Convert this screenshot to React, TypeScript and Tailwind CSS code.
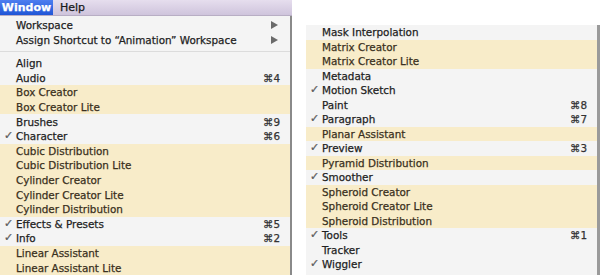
import React from 'react';

type Item = {
  label: string;
  checked?: boolean;
  shortcut?: string;
  sub?: boolean;
  plugin?: boolean;
};

const leftItems: Item[] = [
  { label: 'Align' },
  { label: 'Audio', shortcut: '4' },
  { label: 'Box Creator', plugin: true },
  { label: 'Box Creator Lite', plugin: true },
  { label: 'Brushes', shortcut: '9' },
  { label: 'Character', checked: true, shortcut: '6' },
  { label: 'Cubic Distribution', plugin: true },
  { label: 'Cubic Distribution Lite', plugin: true },
  { label: 'Cylinder Creator', plugin: true },
  { label: 'Cylinder Creator Lite', plugin: true },
  { label: 'Cylinder Distribution', plugin: true },
  { label: 'Effects & Presets', checked: true, shortcut: '5' },
  { label: 'Info', checked: true, shortcut: '2' },
  { label: 'Linear Assistant', plugin: true },
  { label: 'Linear Assistant Lite', plugin: true },
];

const rightItems: Item[] = [
  { label: 'Mask Interpolation' },
  { label: 'Matrix Creator', plugin: true },
  { label: 'Matrix Creator Lite', plugin: true },
  { label: 'Metadata' },
  { label: 'Motion Sketch', checked: true },
  { label: 'Paint', shortcut: '8' },
  { label: 'Paragraph', checked: true, shortcut: '7' },
  { label: 'Planar Assistant', plugin: true },
  { label: 'Preview', checked: true, shortcut: '3' },
  { label: 'Pyramid Distribution', plugin: true },
  { label: 'Smoother', checked: true },
  { label: 'Spheroid Creator', plugin: true },
  { label: 'Spheroid Creator Lite', plugin: true },
  { label: 'Spheroid Distribution', plugin: true },
  { label: 'Tools', checked: true, shortcut: '1' },
  { label: 'Tracker' },
  { label: 'Wiggler', checked: true },
];

function Row({ item, h }: { item: Item; h: string }) {
  return (
    <div
      className={`relative flex items-center pl-4 pr-[10px] ${h} ${
        item.plugin ? 'bg-[#f8ecc9] text-[#3a3020]' : 'bg-[#f4f4f4] text-[#222]'
      }`}
    >
      {item.checked && (
        <span className="absolute left-[4px] top-0 text-[11px] leading-[14.6px] text-[#5a5a5a]">✓</span>
      )}
      <span className="flex-1 whitespace-nowrap">{item.label}</span>
      {item.shortcut && <span className="text-[#333]">⌘{item.shortcut}</span>}
      {item.sub && (
        <svg width="7" height="8" viewBox="0 0 7 8" className="mr-[2px]">
          <path d="M0 0 L7 4 L0 8 Z" fill="#6a6a6a" />
        </svg>
      )}
    </div>
  );
}

export default function App() {
  return (
    <div
      className="flex h-[275px] w-[600px] overflow-hidden bg-white text-[10.4px] leading-none [-webkit-text-stroke:0.25px]"
      style={{ fontFamily: '"DejaVu Sans", "Noto Sans", sans-serif' }}
    >
      {/* menu izquierdo con barra */}
      <div className="flex w-[292px] shrink-0 flex-col">
        <div className="flex h-[17px] items-stretch border-b border-[#b8aec4] bg-gradient-to-b from-[#e6deee] to-[#cfc4dc]">
          <div className="flex w-[53px] items-center justify-center bg-gradient-to-b from-[#4d7ef0] to-[#1f55d6] text-[11px] font-bold text-white">
            Window
          </div>
          <div className="flex items-center px-[7px] text-[11px] text-[#1a1a1a]">Help</div>
        </div>
        <div className="flex flex-1 flex-col border-r-2 border-[#8a8a8a] bg-[#f4f4f4] pt-[2px]">
          <Row item={{ label: 'Workspace', sub: true }} h="h-[14.6px]" />
          <Row item={{ label: 'Assign Shortcut to “Animation” Workspace', sub: true }} h="h-[14.6px]" />
          <div className="flex h-[9px] items-center">
            <div className="h-px w-full bg-[#dcdcdc]" />
          </div>
          {leftItems.map((it) => (
            <Row key={it.label} item={it} h="h-[14.6px]" />
          ))}
        </div>
      </div>

      {/* menu derecho */}
      <div className="ml-[14px] flex flex-1 flex-col pt-[25px]">
        <div className="flex flex-1 flex-col border-r-[3px] border-[#9a9a9a] bg-[#f4f4f4]">
          {rightItems.map((it) => (
            <Row key={it.label} item={it} h="h-[14.5px]" />
          ))}
        </div>
      </div>
    </div>
  );
}
